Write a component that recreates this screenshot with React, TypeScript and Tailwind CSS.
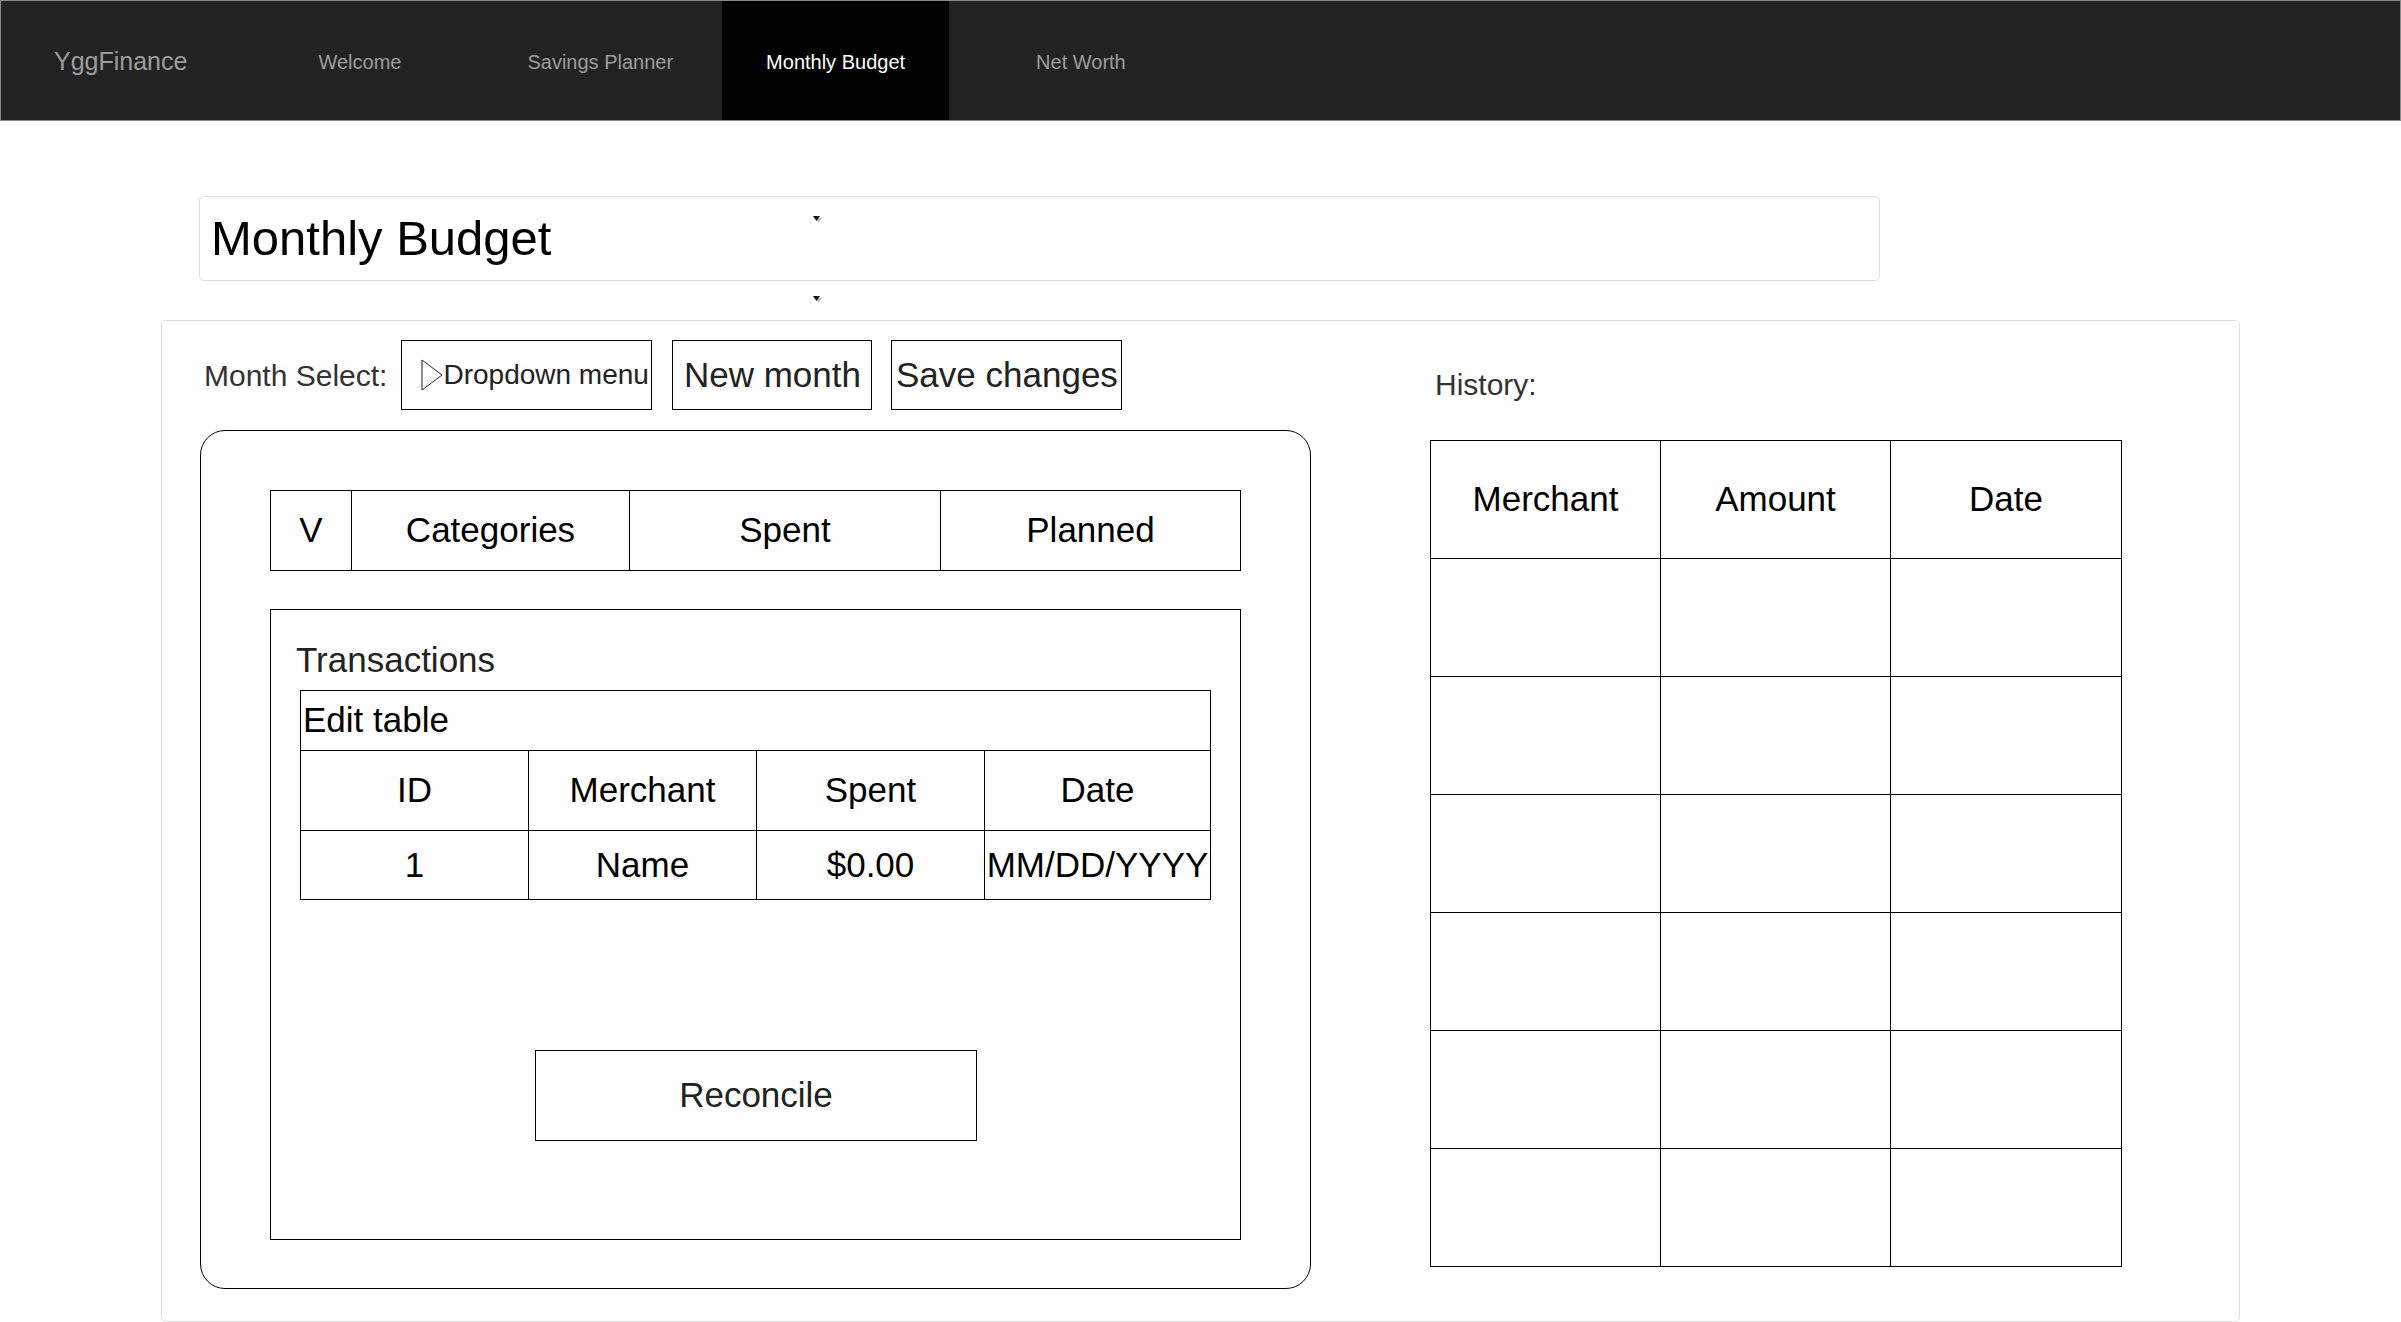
import React from "react";

function Arrow({ className }: { className: string }) {
  return (
    <svg className={className} width="10" height="8" viewBox="0 0 10 8">
      <polygon points="2,2 9,2 5.5,7" fill="#bbb" />
      <polygon points="0,0 7,0 3.5,5" fill="#111" />
    </svg>
  );
}

const cell = "border border-black flex items-center justify-center";

export default function App() {
  const historyRows = [0, 1, 2, 3, 4, 5];
  return (
    <div className="w-[2401px] h-[1322px] overflow-hidden bg-white font-['Liberation_Sans',Arial,sans-serif] text-black">
      {/* Navbar */}
      <nav className="h-[121px] bg-[#222] border border-[#8a8a8a] flex items-stretch text-[#9d9d9d]">
        <div className="flex items-center pl-[53px] pt-[2px] text-[25px]">YggFinance</div>
        <div className="flex items-center ml-[87px] px-[44px] pt-[2px] text-[20px]">Welcome</div>
        <div className="flex items-center ml-[38px] px-[44px] pt-[2px] text-[20px]">Savings Planner</div>
        <div className="flex items-center ml-[5px] px-[44px] pt-[2px] text-[20px] bg-black text-white">Monthly Budget</div>
        <div className="flex items-center ml-[43px] px-[44px] pt-[2px] text-[20px]">Net Worth</div>
      </nav>

      {/* Title */}
      <div className="relative mt-[75px] ml-[199px] w-[1681px] h-[85px] border border-[#ddd] rounded-[5px] flex items-center pl-[11px]">
        <span className="text-[49px] leading-none">Monthly Budget</span>
        <Arrow className="absolute left-[613px] top-[19px]" />
        <Arrow className="absolute left-[613px] top-[99px]" />
      </div>

      {/* Main panel */}
      <div className="mt-[39px] ml-[161px] w-[2079px] h-[1002px] border border-[#ddd] rounded-[5px] flex pl-[38px] pt-[19px]">
        {/* Left column */}
        <div className="w-[1111px] flex flex-col">
          <div className="h-[70px] flex items-center">
            <span className="ml-[4px] text-[30px] text-[#333]">Month Select:</span>
            <div className="ml-[14px] w-[251px] h-[70px] border border-black flex items-center pl-[19px] text-[28px] text-[#222]">
              <svg width="22" height="32" viewBox="0 0 22 32" className="shrink-0">
                <polygon points="1,1 21,16 1,31" fill="none" stroke="#222" strokeWidth="1" />
              </svg>
              <span className="whitespace-nowrap">Dropdown menu</span>
            </div>
            <div className="ml-[20px] w-[200px] h-[70px] border border-black flex items-center justify-center text-[35px] text-[#222]">
              New month
            </div>
            <div className="ml-[19px] w-[231px] h-[70px] border border-black flex items-center justify-center text-[35px] text-[#222] whitespace-nowrap">
              Save changes
            </div>
          </div>

          <div className="mt-[20px] h-[859px] border border-black rounded-[25px] pl-[69px] pt-[59px]">
            {/* Categories header */}
            <div className="w-[971px] h-[81px] flex text-[35px]">
              <div className={`${cell} w-[82px]`}>V</div>
              <div className={`${cell} w-[279px] -ml-px`}>Categories</div>
              <div className={`${cell} w-[312px] -ml-px`}>Spent</div>
              <div className={`${cell} flex-1 -ml-px`}>Planned</div>
            </div>

            {/* Transactions */}
            <div className="mt-[38px] w-[971px] h-[631px] border border-black flex flex-col pl-[29px]">
              <div className="mt-[30px] ml-[-4px] text-[35px] leading-[40px] text-[#222]">Transactions</div>
              <div className="mt-[10px] w-[911px] text-[35px]">
                <div className="h-[61px] border border-black flex items-center pl-[2px]">Edit table</div>
                <div className="h-[81px] flex -mt-px">
                  <div className={`${cell} w-[229px]`}>ID</div>
                  <div className={`${cell} w-[229px] -ml-px`}>Merchant</div>
                  <div className={`${cell} w-[229px] -ml-px`}>Spent</div>
                  <div className={`${cell} flex-1 -ml-px`}>Date</div>
                </div>
                <div className="h-[70px] flex -mt-px">
                  <div className={`${cell} w-[229px]`}>1</div>
                  <div className={`${cell} w-[229px] -ml-px`}>Name</div>
                  <div className={`${cell} w-[229px] -ml-px`}>$0.00</div>
                  <div className={`${cell} flex-1 -ml-px whitespace-nowrap`}>MM/DD/YYYY</div>
                </div>
              </div>
              <div className="mt-[150px] ml-[235px] w-[442px] h-[91px] border border-black flex items-center justify-center text-[35px] text-[#222]">
                Reconcile
              </div>
            </div>
          </div>
        </div>

        {/* Right column */}
        <div className="ml-[119px] flex flex-col">
          <div className="mt-[27px] ml-[5px] text-[30px] leading-[36px] text-[#333]">History:</div>
          <div className="mt-[37px] w-[692px] text-[35px]">
            <div className="h-[119px] flex">
              <div className={`${cell} w-[231px]`}>Merchant</div>
              <div className={`${cell} w-[231px] -ml-px`}>Amount</div>
              <div className={`${cell} flex-1 -ml-px`}>Date</div>
            </div>
            {historyRows.map((r) => (
              <div key={r} className="h-[119px] flex -mt-px">
                <div className={`${cell} w-[231px]`}></div>
                <div className={`${cell} w-[231px] -ml-px`}></div>
                <div className={`${cell} flex-1 -ml-px`}></div>
              </div>
            ))}
          </div>
        </div>
      </div>
    </div>
  );
}
